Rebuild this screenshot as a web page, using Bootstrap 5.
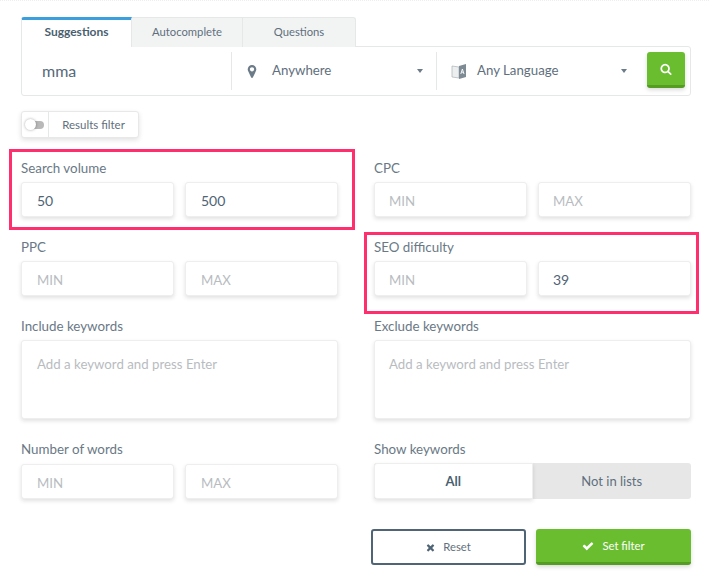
<!DOCTYPE html>
<html lang="en">
<head>
<meta charset="utf-8">
<title>Keyword filter</title>
<link href="https://cdn.jsdelivr.net/npm/bootstrap@5.3.0/dist/css/bootstrap.min.css" rel="stylesheet">
<style>
html,body{background:#fff;}
body{font-family:"Lato","Noto Sans",sans-serif;font-size:13.25px;color:#5f6f7d;}
.pg{width:709px;height:585px;overflow:hidden;padding:16px 18px 0 21px;border-top:1px dotted #eee;}
.tabbar{height:30px;}
.tabitem{width:111px;height:30px;padding-bottom:1px;background:#f2f4f4;border:1px solid #e6e8e8;border-left:0;border-bottom:0;font-size:11.25px;color:#5f6f7d;display:flex;align-items:center;justify-content:center;}
.tabitem.on{background:#fff;border-left:1px solid #e6e8e8;border-top:3px solid #3a9fdc;font-size:12px;padding-bottom:4px;font-weight:700;color:#4a5f70;border-right:1px solid #e6e8e8;border-radius:3px 0 0 0;border-bottom:0;position:relative;z-index:1;}
.tabitem.end{width:113px;border-radius:0 3px 0 0;}
.searchbar{height:50px;margin-top:-1px;border:1px solid #e6e8e8;border-radius:0 3px 3px 3px;}
.seg{height:38px;display:flex;align-items:center;border-right:1px solid #e6e8e8;}
.seg-q{width:210px;padding-left:20px;font-size:16px;color:#55697a;}
.seg-loc{width:205px;padding:0 13px 0 15px;}
.seg-lang{width:210px;padding:0 20px 0 14px;border-right:0;}
.gosq{width:38px;height:36px;margin-top:-2px;background:#6abd2f;border:0;border-bottom:3px solid #549c22;border-radius:3px;box-shadow:0 2px 4px rgba(0,0,0,.15);padding:0;}
.gosq:hover{background:#6abd2f;border-bottom:3px solid #549c22;}
.caretd{width:0;height:0;border-left:3.5px solid transparent;border-right:3.5px solid transparent;border-top:4px solid #6c7b88;}
.lbl-g{margin-left:15px;}
.lbl-l{margin-left:10px;}
.filtbtn{width:118px;height:27px;margin-top:15px;border:1px solid #e8e8e8;border-radius:3px;box-shadow:0 2px 5px rgba(0,0,0,.12);font-size:11.5px;}
.sw{width:27px;height:100%;border-right:1px solid #e6e8e8;display:flex;align-items:center;justify-content:center;}
.swtrack{width:18px;height:8px;border-radius:4px;background:#b9b9b9;position:relative;}
.swknob{position:absolute;left:-1px;top:-1.5px;width:11px;height:11px;border-radius:50%;background:#fff;box-shadow:0 0 3px rgba(0,0,0,.35);}
.swtext{flex:1;text-align:center;padding-top:1px;}
.fgrid{--bs-gutter-x:36px;--bs-gutter-y:0;width:706px;margin-top:22px;margin-left:-18px;margin-right:0;}
.fgrid>div{width:353px;}
.fld{position:relative;margin-bottom:22px;}
.fld.wide{margin-bottom:23px;}
.fld.tail{margin-bottom:30px;}
.flabel{height:22px;line-height:17px;font-size:13.35px;margin:0;color:#6a7986;display:block;}
.fld.wide + .fld .flabel{line-height:15px;}
.pair{display:flex;gap:11px;}
.fin.form-control{height:35px;border:1px solid #eee;border-radius:3px;box-shadow:0 2px 4px rgba(0,0,0,.12);padding:2px 15px 0;font-size:14px;color:#4f6475;}
.fgrid>div+div .fin.form-control{padding-left:14px;}
.fin.form-control::placeholder{color:#b8bcbf;opacity:1;font-size:13.25px;}
.farea.form-control{height:79px;resize:none;border:1px solid #eee;border-radius:3px;box-shadow:0 2px 4px rgba(0,0,0,.12);padding:14px 15px;font-size:13.25px;color:#4f6475;}
.fgrid>div+div .farea.form-control{padding-left:14px;}
.farea.form-control::placeholder{color:#b8bcbf;opacity:1;}
.choice{height:36px;margin-top:-1px;border-radius:3px;background:#e7e7e7;font-size:13px;}
.choice>div{width:158.5px;display:flex;align-items:center;justify-content:center;padding-top:1px;}
.choice .act{background:#fff;font-weight:700;color:#4a5f70;box-shadow:0 2px 4px rgba(0,0,0,.12);border-radius:3px 0 0 3px;border:1px solid #eee;}
.acts{margin-left:350px;gap:10px;}
.btn-rs.btn{width:155px;height:36px;border:2px solid #4f6475;border-radius:3px;background:#fff;color:#5f6f7d;font-size:11.25px;padding:0;}
.btn-go.btn{width:155px;height:36px;border:0;border-bottom:3px solid #549c22;border-radius:3px;background:#6abd2f;color:#fff;font-size:11.25px;padding:1px 0 0;box-shadow:0 2px 4px rgba(0,0,0,.15);}
.mark-a{position:absolute;border:3px solid #ff2f6e;pointer-events:none;}
.m1{left:-12px;top:-11px;width:346px;height:81px;}
.m2{left:-10px;top:-7px;width:335px;height:82px;}
</style>
</head>
<body>
<div class="pg">
  <div class="tabbar d-flex">
    <div class="tabitem on">Suggestions</div>
    <div class="tabitem">Autocomplete</div>
    <div class="tabitem end">Questions</div>
  </div>
  <div class="searchbar d-flex align-items-center bg-white">
    <div class="seg seg-q">mma</div>
    <div class="seg seg-loc">
      <svg width="10" height="15" viewBox="0 0 1024 1792" fill="#6c7b88"><path d="M768 640q0-106-75-181t-181-75-181 75-75 181 75 181 181 75 181-75 75-181zm256 0q0 109-33 179l-364 774q-16 33-47.5 52t-67.5 19-67.5-19-46.5-52l-365-774q-33-70-33-179 0-212 150-362t362-150 362 150 150 362z"/></svg>
      <span class="lbl-g flex-grow-1">Anywhere</span>
      <span class="caretd"></span>
    </div>
    <div class="seg seg-lang">
      <svg width="16" height="17" viewBox="0 0 16 17"><path d="M1 3l7 1v11l-7-1z" fill="#eceeef" stroke="#aab2b8" stroke-width=".7"/><path d="M8 3l7-2v13l-7 2z" fill="#7e8a94"/><path d="M9.8 11l1.6-5 1.6 5M10.5 9.2h1.9" fill="none" stroke="#fff" stroke-width=".9"/></svg>
      <span class="lbl-l flex-grow-1">Any Language</span>
      <span class="caretd"></span>
    </div>
    <button class="btn gosq d-flex align-items-center justify-content-center" aria-label="Search">
      <svg width="12" height="12" viewBox="0 0 1792 1792" fill="#fff"><path d="M1216 832q0-185-131.5-316.5t-316.5-131.5-316.5 131.5-131.5 316.5 131.5 316.5 316.5 131.5 316.5-131.5 131.5-316.5zm512 832q0 52-38 90t-90 38q-54 0-90-38l-343-342q-179 124-399 124-143 0-273.5-55.5t-225-150-150-225-55.5-273.5 55.5-273.5 150-225 225-150 273.5-55.5 273.5 55.5 225 150 150 225 55.5 273.5q0 220-124 399l343 343q37 37 37 90z"/></svg>
    </button>
  </div>
  <div class="filtbtn d-flex align-items-center bg-white">
    <div class="sw"><div class="swtrack"><div class="swknob"></div></div></div>
    <div class="swtext">Results filter</div>
  </div>
  <div class="row fgrid">
    <div>
      <div class="fld"><span class="mark-a m1"></span><label class="flabel">Search volume</label>
        <div class="pair"><input class="form-control fin" value="50"><input class="form-control fin" value="500"></div></div>
      <div class="fld"><label class="flabel">PPC</label>
        <div class="pair"><input class="form-control fin" placeholder="MIN"><input class="form-control fin" placeholder="MAX"></div></div>
      <div class="fld wide"><label class="flabel">Include keywords</label>
        <textarea class="form-control farea" placeholder="Add a keyword and press Enter"></textarea></div>
      <div class="fld tail"><label class="flabel">Number of words</label>
        <div class="pair"><input class="form-control fin" placeholder="MIN"><input class="form-control fin" placeholder="MAX"></div></div>
    </div>
    <div>
      <div class="fld"><label class="flabel">CPC</label>
        <div class="pair"><input class="form-control fin" placeholder="MIN"><input class="form-control fin" placeholder="MAX"></div></div>
      <div class="fld"><span class="mark-a m2"></span><label class="flabel">SEO difficulty</label>
        <div class="pair"><input class="form-control fin" placeholder="MIN"><input class="form-control fin" value="39"></div></div>
      <div class="fld wide"><label class="flabel">Exclude keywords</label>
        <textarea class="form-control farea" placeholder="Add a keyword and press Enter"></textarea></div>
      <div class="fld tail"><label class="flabel">Show keywords</label>
        <div class="choice d-flex"><div class="act">All</div><div>Not in lists</div></div></div>
    </div>
  </div>
  <div class="acts d-flex">
    <button class="btn btn-rs d-flex align-items-center justify-content-center gap-2">
      <svg width="9" height="11" viewBox="0 0 1408 1792" fill="#4f6475"><path d="M1298 1322q0 40-28 68l-136 136q-28 28-68 28t-68-28l-294-294-294 294q-28 28-68 28t-68-28l-136-136q-28-28-28-68t28-68l294-294-294-294q-28-28-28-68t28-68l136-136q28-28 68-28t68 28l294 294 294-294q28-28 68-28t68 28l136 136q28 28 28 68t-28 68l-294 294 294 294q28 28 28 68z"/></svg>Reset</button>
    <button class="btn btn-go d-flex align-items-center justify-content-center gap-2">
      <svg width="12" height="12" viewBox="0 0 1792 1792" fill="#fff"><path d="M1671 566q0 40-28 68l-724 724-136 136q-28 28-68 28t-68-28l-136-136-362-362q-28-28-28-68t28-68l136-136q28-28 68-28t68 28l294 295 656-657q28-28 68-28t68 28l136 136q28 28 28 68z"/></svg>Set filter</button>
  </div>
</div>
<script src="https://cdn.jsdelivr.net/npm/bootstrap@5.3.0/dist/js/bootstrap.bundle.min.js"></script>
</body>
</html>
